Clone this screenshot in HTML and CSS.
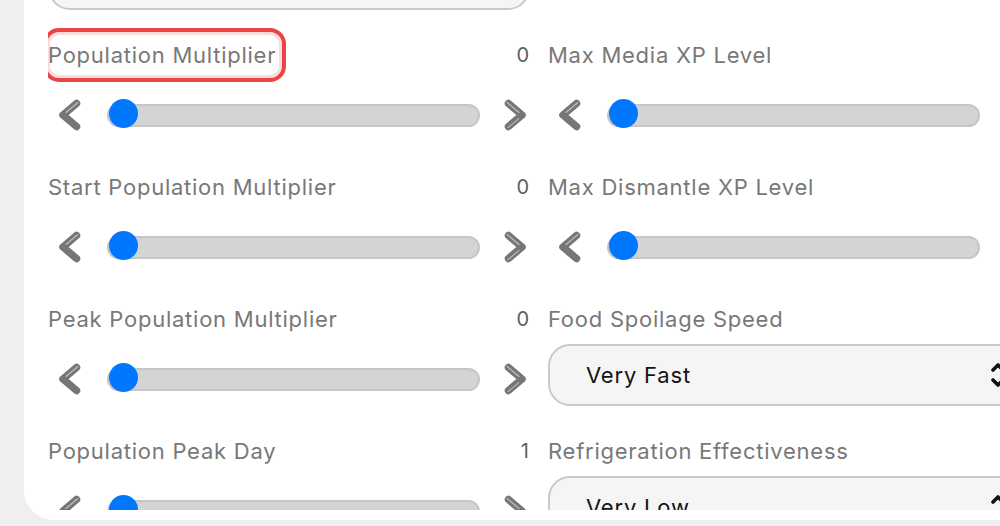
FILE: index.html
```html
<!DOCTYPE html>
<html>
<head>
<meta charset="utf-8">
<link rel="stylesheet" href="styles.css">
</head>
<body>
<svg width="0" height="0" class="defs">
  <defs>
    <symbol id="chev-left" viewBox="0 0 24 32">
      <polyline points="18.5,4.5 5,16 18.5,27.5" fill="none" stroke="#767676" stroke-width="7.5" stroke-linecap="round" stroke-linejoin="round"/>
      <polyline points="19.8,3.6 8,13.4" fill="none" stroke="#bdbdbd" stroke-width="1.3" stroke-linecap="round"/>
    </symbol>
    <symbol id="chev-right" viewBox="0 0 24 32">
      <polyline points="5.5,4.5 19,16 5.5,27.5" fill="none" stroke="#767676" stroke-width="7.5" stroke-linecap="round" stroke-linejoin="round"/>
      <polyline points="4.2,3.6 16,13.4" fill="none" stroke="#bdbdbd" stroke-width="1.3" stroke-linecap="round"/>
      <polyline points="5,28.6 15.8,19.6" fill="none" stroke="#bdbdbd" stroke-width="1.1" stroke-linecap="round"/>
    </symbol>
    <symbol id="updown" viewBox="0 0 16 30">
      <polyline points="3,10 8,5 13,10" fill="none" stroke="#111" stroke-width="3.6" stroke-linecap="round" stroke-linejoin="round"/>
      <polyline points="3,20 8,25 13,20" fill="none" stroke="#111" stroke-width="3.6" stroke-linecap="round" stroke-linejoin="round"/>
    </symbol>
  </defs>
</svg>
<div class="card">
  <div class="viewport">
    <div class="grid">
      <div class="field first">
        <div class="select"><span class="select-text"></span></div>
      </div>
      <div class="field first"></div>

      <div class="field">
        <div class="label-row"><span class="label focused">Population Multiplier</span><span class="value">0</span></div>
        <div class="slider-row">
          <svg class="chev"><use href="#chev-left"/></svg>
          <div class="track"><div class="thumb"></div></div>
          <svg class="chev"><use href="#chev-right"/></svg>
        </div>
      </div>
      <div class="field">
        <div class="label-row"><span class="label">Max Media XP Level</span></div>
        <div class="slider-row">
          <svg class="chev"><use href="#chev-left"/></svg>
          <div class="track"><div class="thumb"></div></div>
          <svg class="chev"><use href="#chev-right"/></svg>
        </div>
      </div>

      <div class="field">
        <div class="label-row"><span class="label">Start Population Multiplier</span><span class="value">0</span></div>
        <div class="slider-row">
          <svg class="chev"><use href="#chev-left"/></svg>
          <div class="track"><div class="thumb"></div></div>
          <svg class="chev"><use href="#chev-right"/></svg>
        </div>
      </div>
      <div class="field">
        <div class="label-row"><span class="label">Max Dismantle XP Level</span></div>
        <div class="slider-row">
          <svg class="chev"><use href="#chev-left"/></svg>
          <div class="track"><div class="thumb"></div></div>
          <svg class="chev"><use href="#chev-right"/></svg>
        </div>
      </div>

      <div class="field">
        <div class="label-row"><span class="label">Peak Population Multiplier</span><span class="value">0</span></div>
        <div class="slider-row">
          <svg class="chev"><use href="#chev-left"/></svg>
          <div class="track"><div class="thumb"></div></div>
          <svg class="chev"><use href="#chev-right"/></svg>
        </div>
      </div>
      <div class="field">
        <div class="label-row"><span class="label">Food Spoilage Speed</span></div>
        <div class="select"><span class="select-text">Very Fast</span><svg class="updown"><use href="#updown"/></svg></div>
      </div>

      <div class="field">
        <div class="label-row"><span class="label">Population Peak Day</span><span class="value">1</span></div>
        <div class="slider-row">
          <svg class="chev"><use href="#chev-left"/></svg>
          <div class="track"><div class="thumb"></div></div>
          <svg class="chev"><use href="#chev-right"/></svg>
        </div>
      </div>
      <div class="field">
        <div class="label-row"><span class="label">Refrigeration Effectiveness</span></div>
        <div class="select"><span class="select-text">Very Low</span><svg class="updown"><use href="#updown"/></svg></div>
      </div>
    </div>
  </div>
</div>
</body>
</html>
```
FILE: styles.css
```css
html, body {
  margin: 0;
  padding: 0;
  height: 526px;
  overflow: hidden;
  background: #efefef;
  font-family: Inter, "Noto Sans", sans-serif;
}
.defs {
  position: absolute;
  width: 0;
  height: 0;
}
.card {
  margin-left: 24px;
  height: 520px;
  background: #ffffff;
  border-bottom-left-radius: 30px;
}
.viewport {
  height: 510px;
  overflow: hidden;
  padding-left: 24px;
}
.grid {
  display: grid;
  grid-template-columns: 482px 482px;
  column-gap: 18px;
  row-gap: 25px;
  margin-top: -52px;
  width: 982px;
}
.field {
  min-height: 107px;
  overflow-x: clip;
}
.field.first {
  min-height: 62px;
}
.label-row {
  height: 40px;
  display: flex;
  align-items: center;
  justify-content: space-between;
}
.label {
  font-size: 22px;
  letter-spacing: 0.75px;
  color: #787878;
  line-height: 40px;
  white-space: nowrap;
}
.label.focused {
  display: inline-block;
  line-height: 40px;
  margin: -7px 0 -7px -5px;
  padding: 3px 6px 3px 1px;
  border: 4px solid #ea4444;
  border-radius: 16px;
  box-shadow: inset 0 0 0 3px #fadcdc;
}
.value {
  font-size: 20px;
  color: #5e5e5e;
  padding-right: 1px;
}
.slider-row {
  margin-top: 25px;
  height: 30px;
  display: flex;
  align-items: center;
  padding-left: 10px;
  padding-right: 3px;
}
.chev {
  width: 24px;
  height: 32px;
  flex: none;
}
.track {
  position: relative;
  flex: 1;
  height: 19px;
  margin: 0 23px 0 25px;
  border: 2px solid #c6c6c6;
  background: #d4d4d4;
  border-radius: 12px;
}
.thumb {
  position: absolute;
  left: 0px;
  top: -7px;
  width: 29px;
  height: 29px;
  border-radius: 50%;
  background: #0077ff;
}
.select {
  margin-top: 5px;
  height: 58px;
  border: 2px solid #c9c9c9;
  background: #f5f5f5;
  border-radius: 22px;
  display: flex;
  align-items: center;
  justify-content: space-between;
  padding: 0 22px 0 36px;
}
.field.first .select {
  margin-top: 0;
}
.select-text {
  font-size: 22px;
  letter-spacing: 0.8px;
  color: #141414;
}
.updown {
  width: 16px;
  height: 30px;
  flex: none;
}
```
